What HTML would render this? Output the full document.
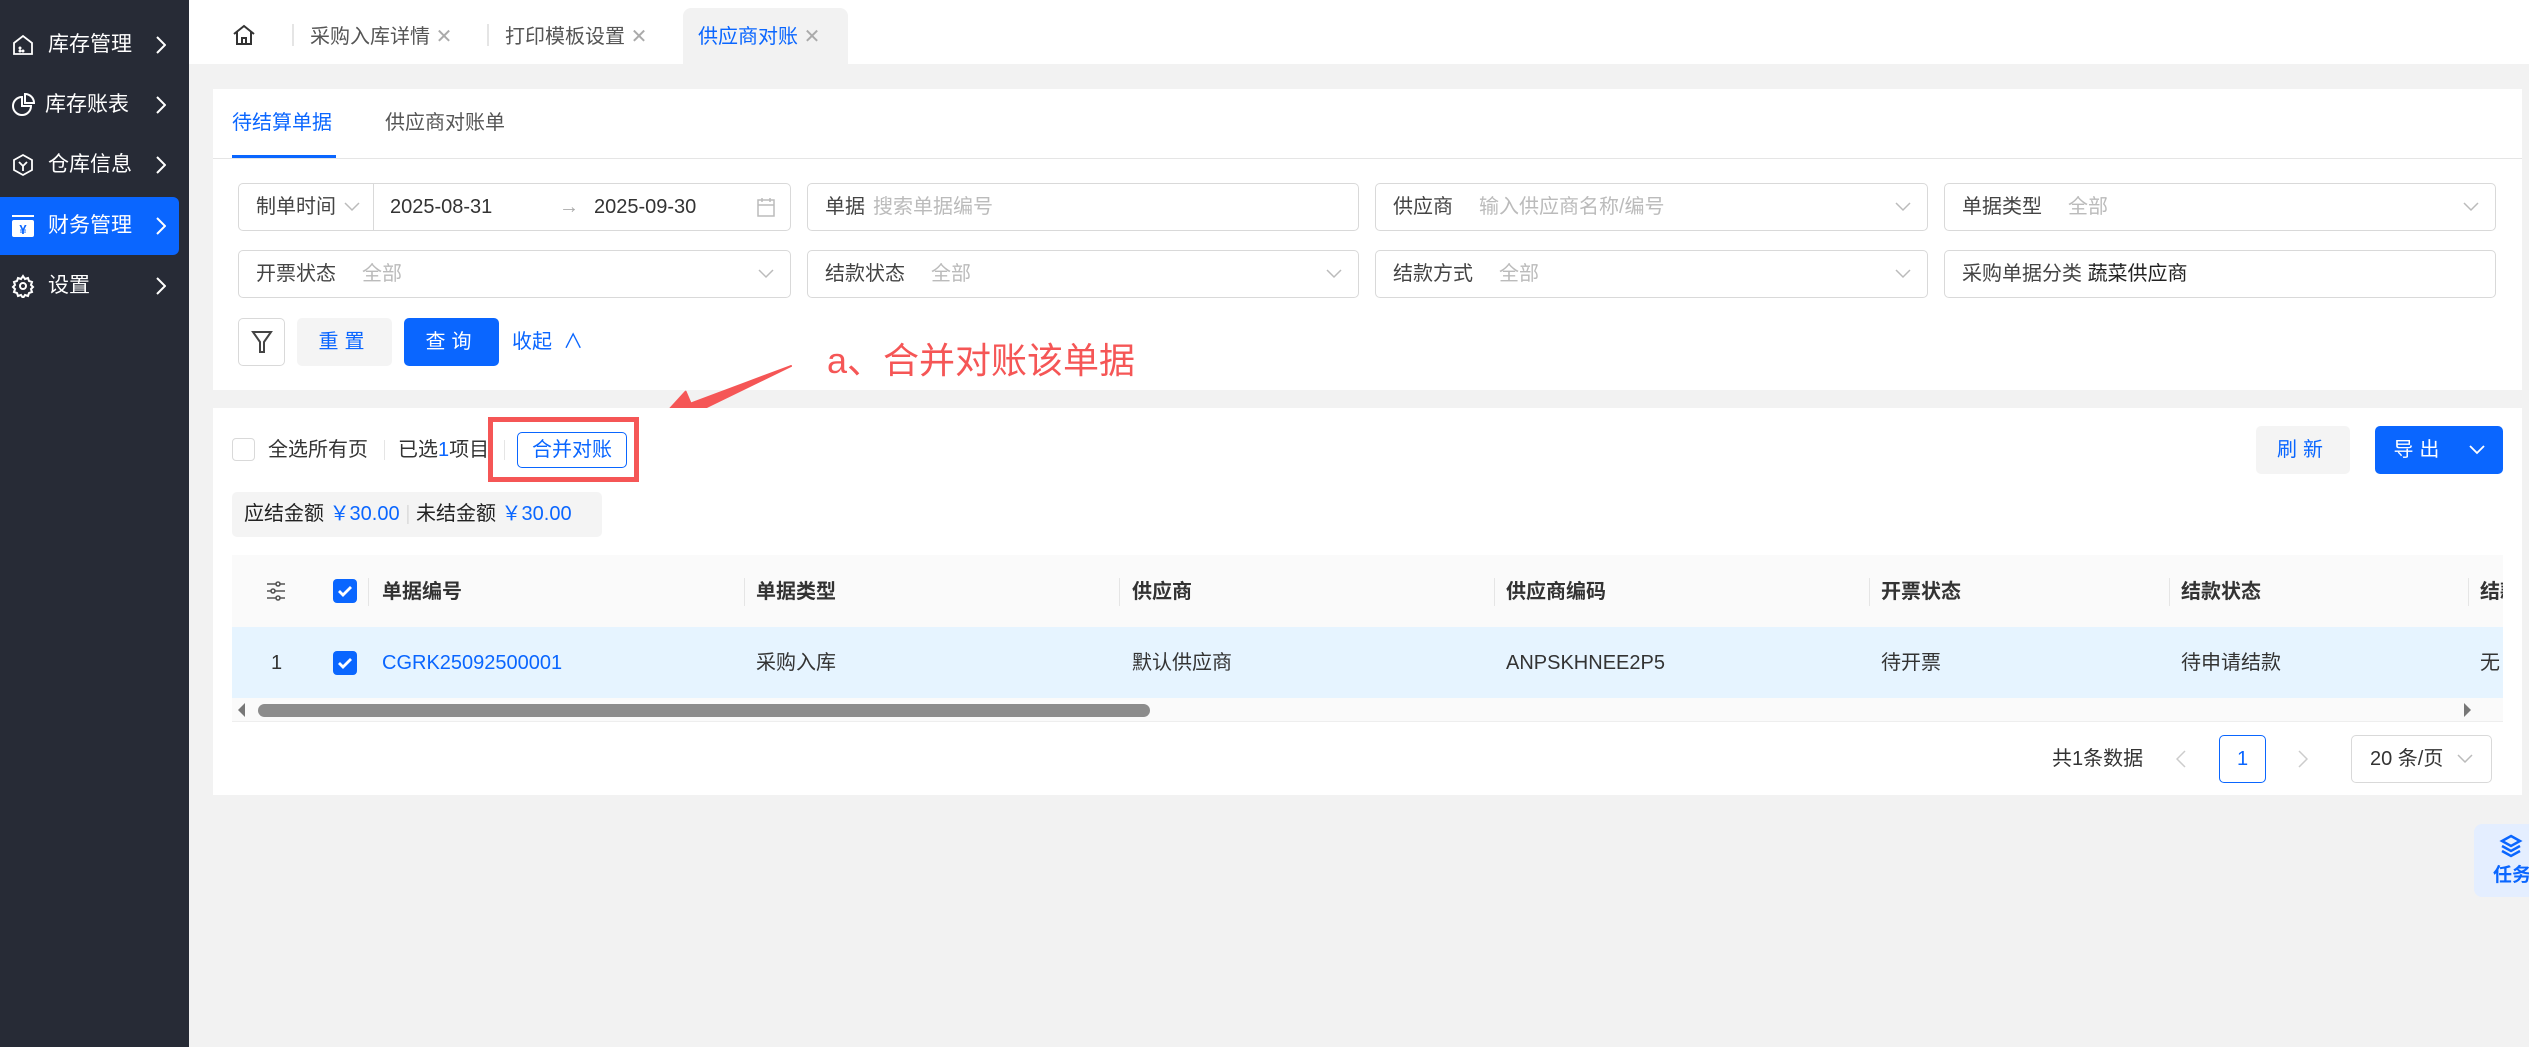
<!DOCTYPE html>
<html><head><meta charset="utf-8"><style>
*{box-sizing:border-box;margin:0;padding:0}
body{width:2529px;height:1047px;background:#f2f2f2;font-family:"Liberation Sans","Noto Sans CJK SC",sans-serif;font-size:20px;color:#333;position:relative;overflow:hidden;line-height:28px}
.a{position:absolute}
.side{left:0;top:0;width:189px;height:1047px;background:#272b36}
.si{position:absolute;left:0;width:179px;height:58px;color:#fff;font-size:21px;display:flex;align-items:center;padding-left:48px}
.si .ch{position:absolute;left:156px;top:20px}
.si svg.ic{position:absolute;left:11px}
.tabs{left:189px;top:0;width:2340px;height:64px;background:#fff}
.tab{position:absolute;top:23px;font-size:20px;color:#555}
.x{color:#aaa;font-size:20px}
.card{background:#fff}
.fld{position:absolute;height:48px;border:1px solid #d9d9d9;border-radius:5px;display:flex;align-items:center;padding-left:17px;font-size:20px;color:#444}
.ph{color:#bbb;margin-left:20px}
.dd{position:absolute;right:16px;top:18px}
.btn{position:absolute;border-radius:5px;display:flex;align-items:center;justify-content:center;font-size:20px}
.hd{position:absolute;top:578px;font-weight:bold;font-size:20px;color:#333;line-height:28px}
.sep{position:absolute;top:578px;width:1px;height:28px;background:#e5e5e5}
.td{position:absolute;top:649px;font-size:20px;color:#333;line-height:28px;height:28px;display:flex;align-items:center}
.cb{position:absolute;width:24px;height:24px;border-radius:4px;background:#0a66ff}
</style></head><body>
<svg width="0" height="0" style="position:absolute"><defs>
<symbol id="dn" viewBox="0 0 16 10"><path d="M1 1l7 7 7-7" fill="none" stroke="#bbb" stroke-width="1.5"/></symbol>
<symbol id="rt" viewBox="0 0 10 18"><path d="M1 1l8 8-8 8" fill="none" stroke="#fff" stroke-width="2"/></symbol>
</defs></svg>
<div class="a side">
 <div class="si" style="top:16px"><svg class="ic" width="24" height="24" viewBox="0 0 24 24" fill="none" stroke="#fff" stroke-width="1.8"><path d="M3 10L12 3l9 7v11H3z"/><circle cx="9" cy="15" r=".6" fill="#fff"/><circle cx="9" cy="18" r=".6" fill="#fff"/><circle cx="12" cy="18" r=".6" fill="#fff"/></svg>库存管理<svg class="ch" width="10" height="18"><use href="#rt"/></svg></div>
 <div class="si" style="top:76px;padding-left:45px"><svg class="ic" width="26" height="26" viewBox="0 0 26 26" fill="none" stroke="#fff" stroke-width="2"><path d="M11 5a9 9 0 1 0 9 9h-9z"/><path d="M14 2v9h9a9 9 0 0 0-9-9z"/></svg>库存账表<svg class="ch" width="10" height="18"><use href="#rt"/></svg></div>
 <div class="si" style="top:136px"><svg class="ic" width="24" height="24" viewBox="0 0 24 24" fill="none" stroke="#fff" stroke-width="1.8"><path d="M12 2l9 5v10l-9 5-9-5V7z"/><path d="M8 9l4 4 4-4M12 13v5"/></svg>仓库信息<svg class="ch" width="10" height="18"><use href="#rt"/></svg></div>
 <div class="si" style="top:197px;height:58px;background:#0a66ff;border-radius:0 6px 6px 0"><svg class="ic" width="24" height="24" viewBox="0 0 24 24"><rect x="1" y="1" width="22" height="2" fill="#fff"/><rect x="1" y="6" width="22" height="17" rx="2" fill="#fff"/><text x="12" y="20" font-size="13" font-weight="bold" fill="#0a66ff" text-anchor="middle">¥</text></svg>财务管理<svg class="ch" width="10" height="18"><use href="#rt"/></svg></div>
 <div class="si" style="top:257px"><svg class="ic" width="24" height="24" viewBox="0 0 24 24" fill="none" stroke="#fff" stroke-width="2"><circle cx="12" cy="12" r="3"/><path d="M12 2l2 3 3-1 1 3 3 1-1 3 2 2-2 2 1 3-3 1-1 3-3-1-2 3-2-3-3 1-1-3-3-1 1-3-2-2 2-2-1-3 3-1 1-3 3 1z"/></svg>设置<svg class="ch" width="10" height="18"><use href="#rt"/></svg></div>
</div>
<div class="a tabs">
 <svg class="a" style="left:43px;top:24px" width="24" height="22" viewBox="0 0 24 22" fill="none" stroke="#333" stroke-width="2"><path d="M2 10L12 2l10 8M5 8v12h14V8M10 20v-6h4v6"/></svg>
 <div class="a" style="left:103px;top:24px;width:2px;height:22px;background:#e5e5e5"></div>
 <div class="tab" style="left:121px">采购入库详情 <span class="x">✕</span></div>
 <div class="a" style="left:298px;top:24px;width:2px;height:22px;background:#e5e5e5"></div>
 <div class="tab" style="left:316px">打印模板设置 <span class="x">✕</span></div>
 <div class="a" style="left:494px;top:8px;width:165px;height:56px;background:#f2f2f2;border-radius:8px 8px 0 0"></div>
 <div class="tab" style="left:509px;color:#0a66ff">供应商对账 <span class="x">✕</span></div>
</div>
<div class="a card" style="left:213px;top:89px;width:2309px;height:301px">
 <div class="a" style="left:19px;top:20px;font-size:20px;color:#0a66ff">待结算单据</div>
 <div class="a" style="left:172px;top:20px;font-size:20px;color:#555">供应商对账单</div>
 <div class="a" style="left:19px;top:66px;width:104px;height:4px;background:#0a66ff"></div>
 <div class="a" style="left:0;top:69px;width:2309px;height:1px;background:#e5e5e5"></div>
</div>
<div class="fld" style="left:238px;top:183px;width:553px">制单时间 <svg style="margin-left:8px" width="16" height="10"><use href="#dn"/></svg>
 <div class="a" style="left:134px;top:0;width:1px;height:46px;background:#d9d9d9"></div>
 <span class="a" style="left:151px;top:9px;color:#333">2025-08-31</span>
 <span class="a" style="left:320px;top:9px;color:#aaa">→</span>
 <span class="a" style="left:355px;top:9px;color:#333">2025-09-30</span>
 <svg class="a" style="left:518px;top:13px" width="18" height="20" viewBox="0 0 18 20" fill="none" stroke="#bbb" stroke-width="1.5"><rect x="1" y="3" width="16" height="16"/><path d="M1 8h16M5 1v4M13 1v4"/></svg>
</div>
<div class="fld" style="left:807px;top:183px;width:552px">单据<span class="ph" style="margin-left:8px">搜索单据编号</span></div>
<div class="fld" style="left:1375px;top:183px;width:553px">供应商<span class="ph" style="margin-left:26px">输入供应商名称/编号</span><svg class="dd" width="16" height="10"><use href="#dn"/></svg></div>
<div class="fld" style="left:1944px;top:183px;width:552px">单据类型<span class="ph" style="margin-left:26px">全部</span><svg class="dd" width="16" height="10"><use href="#dn"/></svg></div>
<div class="fld" style="left:238px;top:250px;width:553px">开票状态<span class="ph" style="margin-left:26px">全部</span><svg class="dd" width="16" height="10"><use href="#dn"/></svg></div>
<div class="fld" style="left:807px;top:250px;width:552px">结款状态<span class="ph" style="margin-left:26px">全部</span><svg class="dd" width="16" height="10"><use href="#dn"/></svg></div>
<div class="fld" style="left:1375px;top:250px;width:553px">结款方式<span class="ph" style="margin-left:26px">全部</span><svg class="dd" width="16" height="10"><use href="#dn"/></svg></div>
<div class="fld" style="left:1944px;top:250px;width:552px">采购单据分类&nbsp;<span style="color:#222">蔬菜供应商</span></div>
<div class="btn" style="left:238px;top:318px;width:47px;height:48px;border:1px solid #d9d9d9"><svg width="22" height="24" viewBox="0 0 22 24" fill="none" stroke="#444" stroke-width="2"><path d="M2 2h18l-7 10v10H9V12z"/></svg></div>
<div class="btn" style="left:297px;top:318px;width:95px;height:48px;background:#f4f4f4;color:#0a66ff;letter-spacing:6px">重置</div>
<div class="btn" style="left:404px;top:318px;width:95px;height:48px;background:#0a66ff;color:#fff;letter-spacing:6px">查询</div>
<div class="a" style="left:512px;top:328px;color:#0a66ff">收起 &nbsp;∧</div>
<div class="a" style="left:827px;top:338px;font-size:36px;color:#f55656;line-height:46px">a、合并对账该单据</div>
<svg class="a" style="left:0;top:0" width="2529" height="1047"><path d="M791 366 L690.7 403.6 L685.6 391.7 L656 424 L699.8 424.7 L694.7 412.8 Z" fill="#f55656" stroke="#f55656" stroke-width="2" stroke-linejoin="round"/></svg>
<div class="a card" style="left:213px;top:408px;width:2309px;height:387px"></div>
<div class="a" style="left:232px;top:438px;width:23px;height:23px;border:1px solid #d9d9d9;border-radius:4px"></div>
<div class="a" style="left:268px;top:436px">全选所有页</div>
<div class="a" style="left:384px;top:440px;width:1px;height:20px;background:#e5e5e5"></div>
<div class="a" style="left:398px;top:436px">已选<span style="color:#0a66ff">1</span>项目</div>
<div class="a" style="left:504px;top:440px;width:1px;height:20px;background:#e5e5e5"></div>
<div class="btn" style="left:517px;top:432px;width:110px;height:36px;border:1px solid #0a66ff;color:#0a66ff">合并对账</div>
<div class="a" style="left:488px;top:417px;width:151px;height:65px;border:5px solid #f55656"></div>
<div class="btn" style="left:2256px;top:426px;width:94px;height:48px;background:#f4f4f4;color:#0a66ff;letter-spacing:6px">刷新</div>
<div class="btn" style="left:2375px;top:426px;width:128px;height:48px;background:#0a66ff;color:#fff;letter-spacing:6px">导出 &nbsp;<svg width="16" height="10" viewBox="0 0 16 10"><path d="M1 1l7 7 7-7" fill="none" stroke="#fff" stroke-width="1.8"/></svg></div>
<div class="a" style="left:232px;top:492px;width:370px;height:45px;background:#f4f4f4;border-radius:5px;padding:8px 12px;font-size:20px;color:#222">应结金额 <span style="color:#0a66ff">￥30.00</span> <span style="color:#ddd">|</span> 未结金额 <span style="color:#0a66ff">￥30.00</span></div>
<div class="a" style="left:232px;top:555px;width:2271px;height:72px;background:#fafafa"></div>
<div class="a" style="left:232px;top:627px;width:2271px;height:71px;background:#e6f4ff"></div>
<div class="a" style="left:232px;top:698px;width:2271px;height:24px;background:#fafafa;border-bottom:1px solid #eee"></div>
<div class="a" style="left:258px;top:704px;width:892px;height:13px;background:#8c8c8c;border-radius:7px"></div>
<div class="a" style="left:238px;top:703px;width:0;height:0;border:7px solid transparent;border-right:7px solid #777;border-left:0"></div>
<div class="a" style="left:2464px;top:703px;width:0;height:0;border:7px solid transparent;border-left:7px solid #777;border-right:0"></div>
<svg class="a" style="left:266px;top:580px" width="20" height="22" viewBox="0 0 20 22" fill="none" stroke="#555" stroke-width="1.6"><path d="M1 4h18M1 11h18M1 18h18"/><circle cx="12" cy="4" r="2" fill="#fafafa"/><circle cx="7" cy="11" r="2" fill="#fafafa"/><circle cx="12" cy="18" r="2" fill="#fafafa"/></svg>
<div class="cb" style="left:333px;top:579px"><svg width="24" height="24"><path d="M6 12l4 4 8-8" fill="none" stroke="#fff" stroke-width="2.8"/></svg></div>
<div class="cb" style="left:333px;top:651px"><svg width="24" height="24"><path d="M6 12l4 4 8-8" fill="none" stroke="#fff" stroke-width="2.8"/></svg></div>
<div class="sep" style="left:368px"></div><div class="hd" style="left:382px">单据编号</div>
<div class="sep" style="left:744px"></div><div class="hd" style="left:756px">单据类型</div>
<div class="sep" style="left:1119px"></div><div class="hd" style="left:1132px">供应商</div>
<div class="sep" style="left:1494px"></div><div class="hd" style="left:1506px">供应商编码</div>
<div class="sep" style="left:1869px"></div><div class="hd" style="left:1881px">开票状态</div>
<div class="sep" style="left:2169px"></div><div class="hd" style="left:2181px">结款状态</div>
<div class="sep" style="left:2468px"></div><div class="hd" style="left:2480px;width:23px;overflow:hidden;white-space:nowrap">结款</div>
<div class="td" style="left:271px">1</div>
<div class="td" style="left:382px;color:#0a66ff">CGRK25092500001</div>
<div class="td" style="left:756px">采购入库</div>
<div class="td" style="left:1132px">默认供应商</div>
<div class="td" style="left:1506px">ANPSKHNEE2P5</div>
<div class="td" style="left:1881px">待开票</div>
<div class="td" style="left:2181px">待申请结款</div>
<div class="td" style="left:2480px;width:23px;overflow:hidden">无</div>
<div class="a" style="left:2052px;top:745px">共1条数据</div>
<svg class="a" style="left:2176px;top:750px" width="10" height="18" viewBox="0 0 10 18"><path d="M9 1L1 9l8 8" fill="none" stroke="#ccc" stroke-width="1.5"/></svg>
<div class="btn" style="left:2219px;top:735px;width:47px;height:48px;border:1px solid #0a66ff;color:#0a66ff">1</div>
<svg class="a" style="left:2298px;top:750px" width="10" height="18" viewBox="0 0 10 18"><path d="M1 1l8 8-8 8" fill="none" stroke="#ccc" stroke-width="1.5"/></svg>
<div class="btn" style="left:2351px;top:735px;width:141px;height:48px;border:1px solid #d9d9d9;justify-content:flex-start;padding-left:18px">20 条/页 <svg style="margin-left:14px" width="16" height="10"><use href="#dn"/></svg></div>
<div class="a" style="left:2474px;top:824px;width:70px;height:73px;background:#e4eeff;border-radius:8px;overflow:hidden">
<svg class="a" style="left:25px;top:10px" width="24" height="26" viewBox="0 0 24 26" fill="none" stroke="#0a66ff" stroke-width="2.5"><path d="M12 2l9 5-9 5-9-5z"/><path d="M3 12l9 5 9-5M3 17l9 5 9-5"/></svg>
<div class="a" style="left:19px;top:38px;color:#0a66ff;font-size:19px;font-weight:bold;white-space:nowrap">任务</div>
</div>
</body></html>
